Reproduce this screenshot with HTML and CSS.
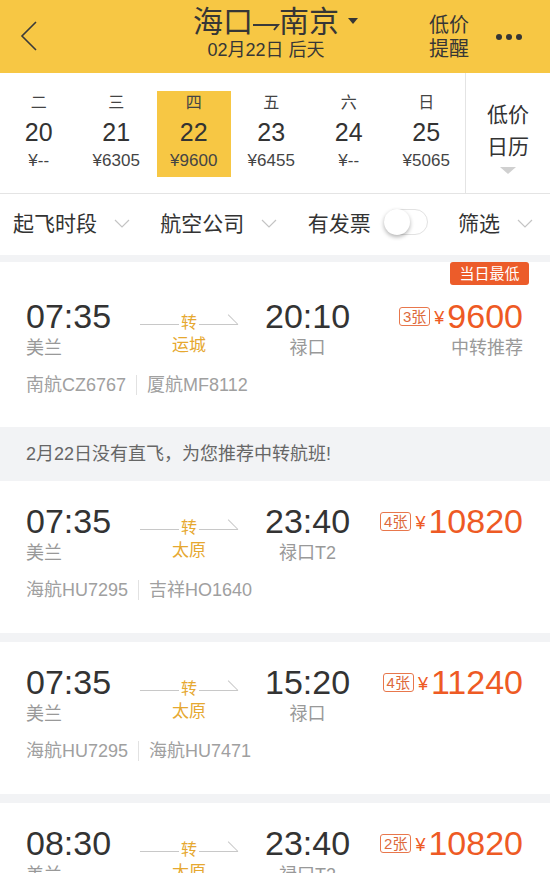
FILE: index.html
```html
<!DOCTYPE html>
<html lang="zh-CN">
<head>
    <meta charset="UTF-8">
    <meta name="viewport" content="width=device-width, initial-scale=1.0">
    <title>海口-南京 航班</title>
    <link rel="stylesheet" href="styles.css">
</head>
<body>
    <header class="topbar">
        <div class="back">
            <svg width="18" height="30" viewBox="0 0 18 30"><polyline points="16,1 2,15 16,29" fill="none" stroke="#3a3a3a" stroke-width="1.6"/></svg>
        </div>
        <div class="route">
            <div class="route-title">
                海口<svg class="route-arrow" width="28" height="30" viewBox="0 0 28 30"><path d="M1 18 H26 L22 23" fill="none" stroke="#3a3a3a" stroke-width="2"/></svg>南京
                <span class="caret"></span>
            </div>
            <div class="route-date">02月22日 后天</div>
        </div>
        <div class="actions">
            <div class="alert">低价<br>提醒</div>
            <div class="more"><i></i><i></i><i></i></div>
        </div>
    </header>

    <section class="days">
        <div class="day-list">
            <div class="day"><span class="wd">二</span><span class="dn">20</span><span class="pr">¥--</span></div>
            <div class="day"><span class="wd">三</span><span class="dn">21</span><span class="pr">¥6305</span></div>
            <div class="day is-active"><span class="wd">四</span><span class="dn">22</span><span class="pr">¥9600</span></div>
            <div class="day"><span class="wd">五</span><span class="dn">23</span><span class="pr">¥6455</span></div>
            <div class="day"><span class="wd">六</span><span class="dn">24</span><span class="pr">¥--</span></div>
            <div class="day"><span class="wd">日</span><span class="dn">25</span><span class="pr">¥5065</span></div>
        </div>
        <div class="cal">低价<br>日历<span class="cal-caret"></span></div>
    </section>

    <nav class="filters">
        <div class="filter">起飞时段<svg class="chev" width="16" height="9" viewBox="0 0 16 9"><polyline points="1,1 8,8 15,1" fill="none" stroke="#c4c4c4" stroke-width="1.2"/></svg></div>
        <div class="filter">航空公司<svg class="chev" width="16" height="9" viewBox="0 0 16 9"><polyline points="1,1 8,8 15,1" fill="none" stroke="#c4c4c4" stroke-width="1.2"/></svg></div>
        <div class="filter">有发票<span class="toggle"><span class="knob"></span></span></div>
        <div class="filter">筛选<svg class="chev" width="16" height="9" viewBox="0 0 16 9"><polyline points="1,1 8,8 15,1" fill="none" stroke="#c4c4c4" stroke-width="1.2"/></svg></div>
    </nav>

    <main class="flights">
        <article class="flight flight-tagged">
            <span class="tag">当日最低</span>
            <div class="flight-main">
                <div class="leg"><div class="time">07:35</div><div class="port">美兰</div></div>
                <div class="via"><div class="via-line"><i></i><span>转</span><i class="head"></i></div><div class="via-city">运城</div></div>
                <div class="leg leg-arr"><div class="time">20:10</div><div class="port">禄口</div></div>
                <div class="fare">
                    <div class="fare-row"><span class="seats">3张</span><span class="yen">¥</span><span class="amount">9600</span></div>
                    <div class="fare-note">中转推荐</div>
                </div>
            </div>
            <div class="flight-nos"><span>南航CZ6767</span><span>厦航MF8112</span></div>
        </article>

        <div class="notice">2月22日没有直飞，为您推荐中转航班!</div>

        <article class="flight">
            <div class="flight-main">
                <div class="leg"><div class="time">07:35</div><div class="port">美兰</div></div>
                <div class="via"><div class="via-line"><i></i><span>转</span><i class="head"></i></div><div class="via-city">太原</div></div>
                <div class="leg leg-arr"><div class="time">23:40</div><div class="port">禄口T2</div></div>
                <div class="fare">
                    <div class="fare-row"><span class="seats">4张</span><span class="yen">¥</span><span class="amount">10820</span></div>
                </div>
            </div>
            <div class="flight-nos"><span>海航HU7295</span><span>吉祥HO1640</span></div>
        </article>

        <article class="flight">
            <div class="flight-main">
                <div class="leg"><div class="time">07:35</div><div class="port">美兰</div></div>
                <div class="via"><div class="via-line"><i></i><span>转</span><i class="head"></i></div><div class="via-city">太原</div></div>
                <div class="leg leg-arr"><div class="time">15:20</div><div class="port">禄口</div></div>
                <div class="fare">
                    <div class="fare-row"><span class="seats">4张</span><span class="yen">¥</span><span class="amount">11240</span></div>
                </div>
            </div>
            <div class="flight-nos"><span>海航HU7295</span><span>海航HU7471</span></div>
        </article>

        <article class="flight">
            <div class="flight-main">
                <div class="leg"><div class="time">08:30</div><div class="port">美兰</div></div>
                <div class="via"><div class="via-line"><i></i><span>转</span><i class="head"></i></div><div class="via-city">太原</div></div>
                <div class="leg leg-arr"><div class="time">23:40</div><div class="port">禄口T2</div></div>
                <div class="fare">
                    <div class="fare-row"><span class="seats">2张</span><span class="yen">¥</span><span class="amount">10820</span></div>
                </div>
            </div>
            <div class="flight-nos"><span>海航HU7295</span><span>吉祥HO1640</span></div>
        </article>
    </main>
</body>
</html>
```

FILE: styles.css
```css
body {
    margin: 0;
    font-family: "Liberation Sans", "Noto Sans CJK SC", sans-serif;
    background: #f2f3f5;
    color: #333;
    overflow: hidden;
}

/* top bar */
.topbar {
    height: 73px;
    background: #f7c744;
    display: grid;
    grid-template-columns: 1fr auto 1fr;
}
.back {
    padding: 21px 0 0 20px;
}
.route {
    display: flex;
    flex-direction: column;
    align-items: center;
    margin-right: 18px;
    padding-top: 6px;
}
.route-title {
    position: relative;
    display: flex;
    align-items: center;
    font-size: 30px;
    line-height: 32px;
    color: #363636;
}
.route-arrow {
    margin: 0 -1px;
}
.caret {
    position: absolute;
    right: -19px;
    top: 12px;
    border-left: 5px solid transparent;
    border-right: 5px solid transparent;
    border-top: 6px solid #363636;
}
.route-date {
    margin-top: 1px;
    font-size: 18px;
    line-height: 22px;
    color: #363636;
}
.actions {
    display: flex;
    align-items: center;
    justify-content: flex-end;
    gap: 27px;
    padding-right: 28px;
}
.alert {
    font-size: 20px;
    line-height: 24px;
    color: #363636;
}
.more {
    display: flex;
    gap: 4px;
}
.more i {
    width: 6px;
    height: 6px;
    border-radius: 50%;
    background: #363636;
}

/* day strip */
.days {
    display: flex;
    background: #fff;
    border-bottom: 1px solid #e4e4e4;
}
.day-list {
    flex: 0 0 465px;
    display: flex;
    padding: 18px 0 16px;
}
.day {
    flex: 1;
    margin: 0 2px;
    display: flex;
    flex-direction: column;
    align-items: center;
    padding: 2px 0 6px;
}
.day.is-active {
    background: #f7c744;
}
.wd {
    font-size: 16px;
    line-height: 20px;
    color: #444;
}
.dn {
    margin-top: 5px;
    font-size: 25px;
    line-height: 28px;
}
.pr {
    margin-top: 5px;
    font-size: 17px;
    line-height: 20px;
    color: #444;
}
.cal {
    flex: 1;
    border-left: 1px solid #e4e4e4;
    display: flex;
    flex-direction: column;
    align-items: center;
    padding-top: 26px;
    font-size: 21px;
    line-height: 32px;
    text-align: center;
}
.cal-caret {
    margin-top: 4px;
    border-left: 8px solid transparent;
    border-right: 8px solid transparent;
    border-top: 7px solid #d0d0d0;
}

/* filters */
.filters {
    height: 61px;
    box-sizing: border-box;
    padding: 0 17px 5px 13px;
    background: #fff;
    display: flex;
    align-items: center;
    justify-content: space-between;
}
.filter {
    display: flex;
    align-items: center;
    font-size: 21px;
    color: #333;
}
.chev {
    margin-left: 17px;
    margin-top: 3px;
}
.toggle {
    margin-left: 13px;
    width: 44px;
    height: 26px;
    box-sizing: border-box;
    border: 1px solid #e2e2e2;
    border-radius: 13px;
    display: flex;
    align-items: center;
}
.knob {
    width: 26px;
    height: 26px;
    margin-left: -1px;
    border-radius: 50%;
    background: #fff;
    box-shadow: 0 2px 4px rgba(0, 0, 0, 0.3);
}

/* flight list */
.flights {
    display: flex;
    flex-direction: column;
    gap: 9px;
    padding-top: 7px;
}
.flight {
    position: relative;
    background: #fff;
    padding: 22px 27px 31px 26px;
}
.flight-tagged {
    padding-top: 36px;
    padding-bottom: 30px;
}
.tag {
    position: absolute;
    top: 0;
    right: 21px;
    width: 79px;
    height: 23px;
    line-height: 23px;
    text-align: center;
    font-size: 15px;
    color: #fff;
    background: #ec5c2a;
    border-radius: 3px;
}
.flight-main {
    display: flex;
}
.leg {
    width: 114px;
}
.leg-arr {
    width: 85px;
    margin-left: 27px;
    text-align: center;
}
.time {
    font-size: 34px;
    line-height: 36px;
    color: #333;
    white-space: nowrap;
}
.port {
    margin-top: 2px;
    font-size: 18px;
    line-height: 24px;
    color: #999;
    white-space: nowrap;
}
.via {
    width: 98px;
    text-align: center;
    color: #e6a830;
}
.via-line {
    height: 36px;
    box-sizing: border-box;
    padding-top: 10px;
    display: flex;
    align-items: center;
    font-size: 16px;
}
.via-line i {
    flex: 1;
    height: 1px;
    margin-top: 7px;
    background: #c8c8c8;
}
.via-line span {
    padding: 0 2px;
}
.via-line .head {
    position: relative;
}
.via-line .head::after {
    content: '';
    position: absolute;
    right: 0;
    top: 0;
    width: 14px;
    height: 1px;
    background: #c8c8c8;
    transform-origin: right center;
    transform: rotate(45deg);
}
.via-city {
    font-size: 17px;
    line-height: 24px;
}
.fare {
    flex: 1;
    text-align: right;
}
.fare-row {
    height: 36px;
    display: flex;
    align-items: center;
    justify-content: flex-end;
    color: #ee5a24;
}
.seats {
    font-size: 15px;
    line-height: 17px;
    padding: 0 3px;
    border: 1px solid #e8774c;
    border-radius: 3px;
    color: #dd6a3c;
}
.yen {
    margin-left: 4px;
    margin-top: 4px;
    font-size: 18px;
}
.amount {
    margin-left: 3px;
    font-size: 34px;
    line-height: 36px;
}
.fare-note {
    margin-top: 2px;
    font-size: 18px;
    line-height: 24px;
    color: #999;
}
.flight-nos {
    margin-top: 13px;
    display: flex;
    align-items: center;
    font-size: 18px;
    line-height: 24px;
    color: #a0a0a0;
}
.flight-nos span + span {
    margin-left: 10px;
    padding-left: 10px;
    border-left: 1px solid #e2e2e2;
    line-height: 20px;
}
.notice {
    height: 36px;
    line-height: 36px;
    padding-left: 26px;
    font-size: 18px;
    color: #666;
}
```
